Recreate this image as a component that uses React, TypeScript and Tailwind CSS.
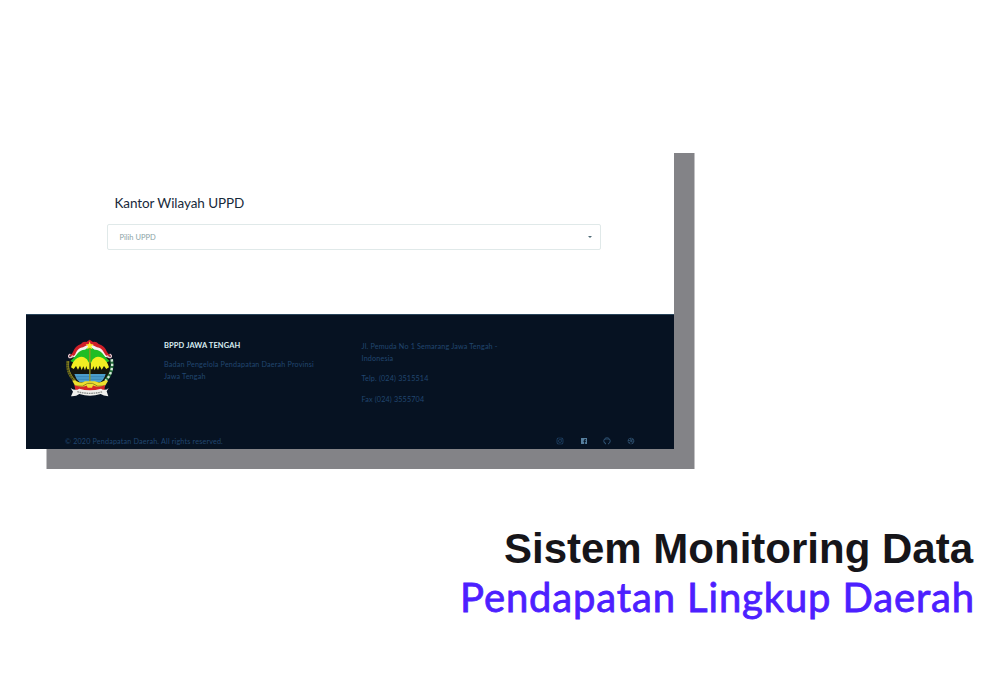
import { RiInstagramLine, RiFacebookBoxFill, RiDribbbleLine } from 'react-icons/ri';

function Crest() {
  return (
    <svg viewBox="33 27 150 180" className="mt-[9px] ml-[40px] h-[60px] w-[50px] shrink-0">
      <path d="M48 82 Q44 112 50 140 Q58 158 75 170 H135 Q154 156 162 138 Q167 105 161 82 L106 45Z" fill="#14160e" />
      <path d="M42 74 Q50 76 54 66 Q60 48 78 42 Q84 34 94 36 L104 29 L114 36 Q124 34 131 42 Q150 48 156 66 Q161 76 168 72 L164 80 H148 L105 52 L62 80 H48Z" fill="#cf1f28" />
      <path d="M51 82 Q62 76 64 66 Q70 54 84 52 Q94 46 104 43 Q116 46 126 52 Q140 54 146 66 Q150 76 160 82Z" fill="#f4f5ef" />
      <path d="M46 93 Q60 82 68 70 Q78 58 90 59 L104 49 L119 59 Q132 58 142 70 Q150 82 164 93 L150 100 H60Z" fill="#1fbd24" />
      <path d="M48 112 Q54 92 67 84 Q80 78 87 82 Q97 86 102 98 V118 H97 L94 108 L90 121 L85 109 L80 120 L75 107 L69 119 L63 108 L56 117Z" fill="#f2ee22" />
      <path d="M162 112 Q156 92 143 84 Q129 78 122 82 Q112 86 108 98 V118 H112 L115 108 L119 121 L124 109 L129 120 L134 107 L140 119 L147 108 L154 117Z" fill="#f2ee22" />
      <path d="M58 132 H152 Q147 149 136 157 H74 Q63 148 58 132Z" fill="#4b9dcb" />
      <path d="M64 140 H147 M69 148 H140" stroke="#307cab" strokeWidth="2" />
      <path d="M104.500 53 V156" stroke="#98951d" strokeWidth="4" />
      <path d="M104 34 L107 43 H116 L109 49 L112 58 L104 53 L96 58 L99 49 L92 43 H101Z" fill="#fff02b" />
      <path d="M46 72 Q37 77 43 83 Q52 83 53 76 M164 72 Q173 77 167 83 Q158 83 157 76" fill="none" stroke="#e8c3ca" strokeWidth="4" />
      <path d="M39 93 Q33 128 61 154" fill="none" stroke="#67651a" strokeWidth="9" strokeDasharray="6 1" />
      <path d="M40 93 Q37 127 62 153" fill="none" stroke="#aaa526" strokeWidth="1.5" />
      <path d="M170 88 Q177 126 151 153" fill="none" stroke="#27723c" strokeWidth="9" />
      <path d="M170 88 Q177 126 151 153" fill="none" stroke="#d7eadb" strokeWidth="7" strokeDasharray="7 6" />
      <path d="M52 152 Q58 148 65 154 Q79 161 90 154 H120 Q133 161 146 153 Q153 148 159 153 L148 171 H62Z" fill="#eee02d" />
      <path d="M64 168 Q84 173 98 160 H112 Q127 173 147 168" fill="none" stroke="#8c8820" strokeWidth="3" />
      <path d="M58 165 Q82 176 99 165 H110 Q130 176 150 165 L148 184 H62Z" fill="#d3272b" />
      <path d="M94 164 H115 L111 173 H98Z" fill="#f2df31" />
      <path d="M47 174 Q60 184 73 176 Q104 186 138 176 Q150 184 161 174 L155 184 L160 199 Q145 198 137 192 Q105 202 73 192 Q64 200 48 199 L54 185Z" fill="#f0f0ed" />
      <path d="M67 185 Q104 195 143 185" fill="none" stroke="#8b8e8b" strokeWidth="4" strokeDasharray="5 2" />
    </svg>
  );
}

function GithubMark() {
  return (
    <svg viewBox="0 0 24 24" className="h-[8px] w-[8px]" fill="none" stroke="currentColor" strokeWidth="3">
      <path d="M6 9 V5 L9 6.500 H15 L18 5 V9" strokeWidth="2" />
      <path d="M9 21 A9.500 9.500 0 1 1 15 21 M9 18.500 Q6 20 5 17" />
    </svg>
  );
}

export default function App() {
  return (
    <main className="h-[695px] overflow-hidden bg-white pt-[133px] font-['Lato','Noto_Sans',sans-serif]">
      <section className="ml-[26px] flex h-[316px] w-[648px] flex-col bg-white shadow-[20.5px_20px_0_#838387]">
        <div className="h-[181px] pt-[60px] pl-[81px]">
          <h1 className="pl-[7.5px] text-[13.5px] leading-[20px] tracking-[-0.08px] whitespace-nowrap text-[#182a3b]">Kantor Wilayah UPPD</h1>
          <div className="mt-[11px] flex h-[26px] w-[494px] items-center justify-between rounded-[2px] border border-[#e0e9e9] pr-[8px] pl-[11.5px] text-[7.5px] text-[#8ba3a6]">
            <span className="pt-px">Pilih UPPD</span>
            <svg viewBox="0 0 4 2" className="h-[2px] w-[4px]"><path d="M0 0H4L2 2Z" fill="#506c78" /></svg>
          </div>
        </div>
        <footer className="flex h-[135px] flex-col border-t border-[#28445a] bg-[#061222] text-[7.2px] leading-[12px] tracking-[0.17px] text-[#21466f]">
          <div className="flex h-[120px] pt-[15px]">
            <Crest />
            <div className="ml-[48px] w-[197.5px] pt-[10px]">
              <h2 className="text-[7.5px] font-bold tracking-[0.12px] whitespace-nowrap text-[#d9edf2]">BPPD JAWA TENGAH</h2>
              <p className="mt-[7px] whitespace-nowrap">Badan Pengelola Pendapatan Daerah Provinsi<br />Jawa Tengah</p>
            </div>
            <div className="pt-[10.5px] whitespace-nowrap">
              <p>Jl. Pemuda No 1 Semarang Jawa Tengah -<br />Indonesia</p>
              <p className="mt-[8.5px]">Telp. (024) 3515514</p>
              <p className="mt-[9px]">Fax (024) 3555704</p>
            </div>
          </div>
          <div className="flex justify-between pt-[0.6px] pr-[39.5px] pl-[39px]">
            <span>© 2020 Pendapatan Daerah. All rights reserved.</span>
            <div className="-mt-px flex items-center gap-[15.5px] text-[8px] text-[#315576]">
              <RiInstagramLine className="text-[#244b73]" /><RiFacebookBoxFill className="text-[#567f9e]" /><GithubMark /><RiDribbbleLine />
            </div>
          </div>
        </footer>
      </section>
      <div className="mt-[75px] flex flex-col items-end pr-[30px] whitespace-nowrap">
        <p className="pr-px font-['Liberation_Sans',sans-serif] text-[42px] leading-[50px] font-bold text-[#161519]">Sistem Monitoring Data</p>
        <p className="-mr-px -mt-px text-[40px] leading-[48px] tracking-[0.86px] text-[#4c20ff] [-webkit-text-stroke:0.8px_#4c20ff]">Pendapatan Lingkup Daerah</p>
      </div>
    </main>
  );
}
